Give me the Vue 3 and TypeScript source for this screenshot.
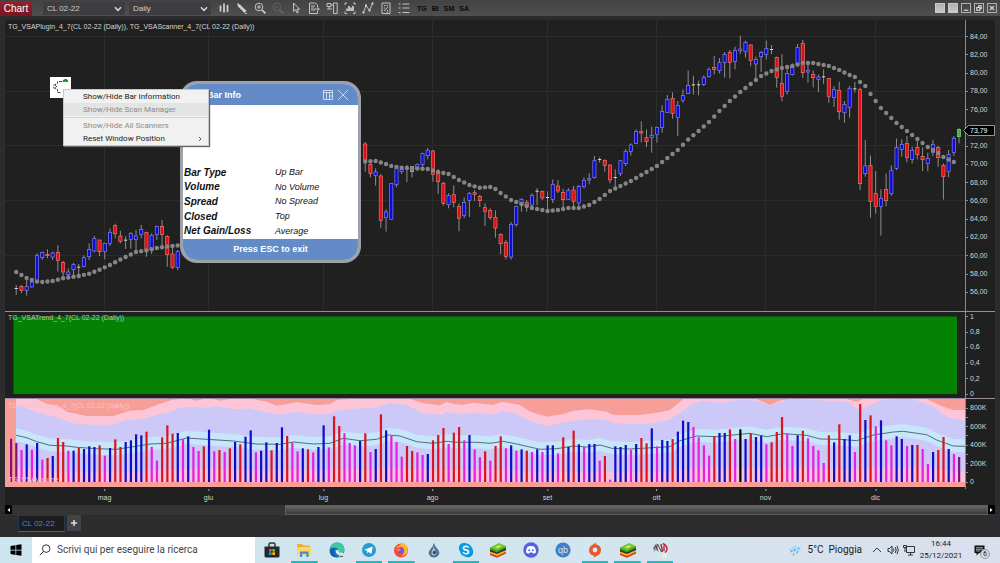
<script setup lang="ts">
import { ref } from 'vue'

type Pt = [number, number]
interface Segment { start: number; base: number; rows: string }

const STEP = 5.209
const FIRST_X = 11
const barX = (i: number): number => FIRST_X + i * STEP

/* Each entry: colour, wick top, body top, body bottom, wick bottom (third-units from the segment base). */
const segments: Segment[] = [
  {
    start: 1,
    base: 160,
    rows:
      'w 375 384 386 405,r 375 379 391 399,b 355 380 391 407,b 355 366 381 383,b 280 287 360 362,b 275 277 293 300,r 268 283 287 295,b 275 279 291 300,r 256 277 301 335,r 303 307 336 350,b 325 336 344 350,b 309 314 329 345,w 312 320 322 355,b 286 293 319 322,b 250 268 290 300,b 228 236 273 277,r 240 240 275 288,b 248 250 274 298,b 205 217 250 258,r 191 197 221 235,r 212 228 244 250,w 229 239 241 267,b 216 220 238 266,b 210 228 239 275,b 195 208 223 235,r 215 217 268 290,b 220 226 267 282,b 197 199 224 240,r 180 199 223 262,r 226 229 284 320,r 260 282 322 327,b 270 275 322 330',
  },
  {
    start: 68,
    base: 120,
    rows:
      'r 66 72 121 155,r 130 133 160 172,b 145 156 166 197,r 162 168 301 323,b 268 276 293 335,b 190 190 298 298,b 142 146 194 202,b 143 148 154 162,w 135 144 146 186,g 138 139 155 172,b 130 134 146 150,b 98 101 133 140,b 84 91 107 118,r 90 93 163 185,r 148 155 185 222,r 185 190 250 257,b 220 226 254 265,r 196 224 247 262,r 250 259 295 334,b 232 247 286 294,b 216 220 241 291,r 210 218 223 243,r 224 229 242 261,r 250 263 274 318,r 265 271 292 300,r 271 292 324 353,r 340 343 371 403,r 360 367 409 418,b 306 313 411 419,b 257 260 314 320,b 235 238 255 275,r 240 247 260 275,b 220 226 255 268,w 204 212 214 256,r 212 214 234 240,w 214 231 233 268,b 178 193 238 249,r 180 198 213 219,r 206 217 239 264,b 204 211 238 240,r 198 210 244 262,b 195 199 249 263,b 172 181 200 205,b 160 176 180 193,b 108 122 173 176,w 112 117 119 128,r 118 121 136 155,r 133 135 180 190,w 148 171 173 203,b 120 122 160 168,b 87 94 131 138,b 70 75 94 107,b 28 34 70 72,r 4 34 39 67,r 28 53 65 81,b 20 46 52 98',
  },
  {
    start: 124,
    base: 30,
    rows:
      'b 290 292 313 338,b 226 244 292 308,b 195 208 248 248,r 187 205 250 266,b 213 226 262 318,b 178 196 211 218,b 121 166 191 192,w 137 163 165 194,w 152 163 165 196,b 136 142 163 168,b 113 119 140 143,r 78 112 118 133,b 84 98 122 130,b 66 73 97 143,r 60 67 97 145,b 50 61 94 118,b 17 57 62 72,b 32 37 64 83,r 43 45 91 109,b 80 88 102 150,b 63 67 80 126,b 32 55 73 88,w 45 57 59 73,r 80 82 142 173,r 73 160 199 214,b 112 130 184 193,b 100 110 134 136,b 42 52 100 110,r 30 40 128 144,b 105 121 126 158,r 121 133 143 172,b 134 141 148 186,w 118 139 141 162,r 145 145 199 218,b 168 178 203 231,r 155 181 245 269,b 213 223 248 278,b 168 175 232 263,w 156 175 177 188,r 173 179 461 480,b 330 408 431 440,r 377 406 514 563,r 423 490 529 551,b 478 505 529 617,r 431 478 512 529,b 406 422 491 497,b 326 352 415 420,b 328 343 358 380,r 318 340 383 397,b 350 361 388 400,r 325 352 374 388,r 352 379 389 423,b 368 385 400 424,b 329 343 368 378,r 348 352 383 410,r 400 406 440 509,b 360 373 424 442,b 318 325 367 378,n 295 298 320 340',
  },
]

const candles = segments.flatMap((s) =>
  s.rows.split(',').map((row, k) => {
    const [kind, ...v] = row.split(' ')
    const [wt, bt, bb, wb] = v.map((n) => s.base + Number(n) / 3)
    return { kind, x: barX(s.start + k), wt, bt, h: Math.max(bb - bt, 1), wb }
  }),
)

const averageSegments: Pt[][] = [
  [[1, 272], [2, 275], [3, 278], [4, 280], [5, 281.6], [6, 282], [8, 281], [10, 278.3], [13, 276], [15, 273.7], [17, 269.7], [19, 265], [21, 259.5], [24, 252], [26, 250.5], [28, 248], [30, 246.5], [33, 245]],
  [[68, 161.5], [70, 161], [72, 164], [73, 166], [75, 167.7], [80, 169], [82, 172], [84, 174], [86, 180], [88, 185], [90, 187.7], [92, 187], [93, 189], [94, 193], [96, 200], [98, 204], [100, 208], [103, 211], [105, 210], [107, 208], [109, 208], [111, 205], [113, 199], [115, 191], [117, 186], [119, 181], [121, 175], [122, 172], [124, 166], [126, 158], [128, 150], [130, 139.5], [132, 131], [134, 122], [136, 111], [138, 101], [140, 92], [142, 84], [144, 76], [146, 71], [148, 68], [150, 66], [152, 63], [154, 63], [155, 64], [157, 66], [159, 70], [161, 75], [162, 77], [163, 82], [164, 86], [165, 94], [166, 101], [167, 108], [168, 113], [170, 123], [172, 131], [174, 139], [176, 147], [178, 153], [179, 157], [181, 162]],
]
const dots: Pt[] = averageSegments.flatMap((seg) => {
  const out: Pt[] = []
  for (let k = 0; k < seg.length - 1; k++) {
    const [a, ya] = seg[k]
    const [b, yb] = seg[k + 1]
    for (let i = a; i < b; i++) out.push([barX(i), ya + ((yb - ya) * (i - a)) / (b - a)])
  }
  const last = seg[seg.length - 1]
  out.push([barX(last[0]), last[1]])
  return out
})

const volumeData =
  'p146 p159 m180 b163 m179 b159 m209 r204 b198 r144 r156 m182 b182 r174 b177 b169 b171 r166 m197 b174 r148 r171 b156 b151 b133 b136 r125 m171 m212 r142 r106 r131 b129 m148 b139 m171 m183 r169 b119 m184 r180 m186 r175 b156 r163 b140 b121 m187 b182 b157 r181 b159 b112 r138 m158 m184 b175 r178 m187 b171 b106 m172 r79 r108 m130 m159 m166 b153 r130 m186 b177 r73 b121 m138 m156 m200 r168 r183 m187 m195 b192 r151 r135 r114 m162 r128 r111 m151 b135 m178 m202 r184 m212 r168 r139 m175 b166 m182 b178 r182 m186 b178 m186 b166 b166 m190 r142 b171 r122 b163 m171 b162 b162 m212 r198 m269 b169 b171 b165 m180 b162 r144 r160 b115 m169 b150 b153 r147 b125 b92 b96 m111 m142 m166 m197 r139 b129 b129 r118 m147 k118 b147 r130 b141 b137 m163 r157 r126 r81 m131 m168 b136 r122 m145 m168 m181 m219 r136 b157 r103 b147 b136 m186 r42 b90 r76 m109 b91 m151 m166 b139 b147 m168 b165 r165 m177 m222 b186 r180 r141 b177 m192 p201'
const volumes = volumeData.split(' ').map((v, i) => ({ kind: v[0], x: barX(i) - 1, y: 390 + Number(v.slice(1)) / 3 }))

const line = (origin: number, raw: string): Pt[] =>
  raw.split(' ').map((p) => {
    const [x, y] = p.split(',').map(Number)
    return [origin + x / 3, 390 + y / 3]
  })

const outer: Pt[] = [
  ...line(0, '48,27 110,27 140,42 180,50 200,65 260,78 340,78 390,62 430,60 470,45 515,30 540,27 570,27 590,32 610,27 640,27 660,32 690,27 760,27 800,35 830,47 890,37 950,45'),
  ...line(330, '0,42 20,30 60,27 240,27 280,40 330,46 350,36 370,42 400,44 430,38 490,45 515,35 570,45 600,65 650,80 700,72 730,62 780,58 830,65 850,75 930,75'),
  ...line(660, '0,67 30,60 70,27 290,27 330,45 365,30 400,27 560,27 590,35 610,27 800,27 850,50 880,60 915,60'),
]
const inner: Pt[] = [
  ...line(0, '48,45 100,62 140,75 180,85 220,100 260,104 340,104 380,90 430,86 470,75 510,65 545,52 600,50 620,55 650,48 700,58 750,55 790,65 840,74 890,65 950,74'),
  ...line(330, '0,72 30,60 90,55 130,55 180,38 230,45 280,70 330,75 350,65 380,72 430,68 490,74 515,62 560,72 600,92 650,108 700,98 730,92 780,88 830,90 850,100 940,102'),
  ...line(660, '0,95 30,88 60,70 100,40 130,32 180,38 230,30 290,32 330,48 365,34 400,27 560,35 600,60 620,50 660,32 700,27 760,28 820,50 860,80 915,92'),
]
const mean: Pt[] = [
  ...line(0, '48,136 80,143 110,155 150,166 200,168 230,172 290,176 350,178 400,170 450,162 500,160 560,144 620,148 700,153 770,162 840,163 880,156 940,162'),
  ...line(330, '0,160 40,145 90,152 140,148 175,135 210,138 260,155 310,160 350,154 380,157 440,157 480,160 520,154 560,162 630,178 680,176 730,168 770,171 810,165 845,175 900,177 950,174'),
  ...line(660, '0,172 30,170 60,152 110,138 170,140 270,130 320,140 370,131 440,136 480,147 540,148 590,152 640,135 700,126 730,124 800,134 830,150 880,168 915,169'),
]
const str = (pts: Pt[]): string => pts.map((p) => `${p[0].toFixed(1)},${p[1].toFixed(1)}`).join(' ')
const down = (pts: Pt[], y: number): string => `${str(pts)} 965,${y} 16,${y}`
const shift = (pts: Pt[], d: number): Pt[] => pts.map(([x, y]) => [x, y + d])
const glow = `${str(shift(mean, -7))} ${str(shift(mean, 6).reverse())}`
const lower: Pt[] = mean.map(([x, y]) => [x, 471 + (y - 445) * 0.3])

const months = [
  { name: 'mag', x: 104.5 }, { name: 'giu', x: 208.5 }, { name: 'lug', x: 323.5 }, { name: 'ago', x: 432.5 },
  { name: 'set', x: 547.5 }, { name: 'ott', x: 656.5 }, { name: 'nov', x: 765.5 }, { name: 'dic', x: 875.5 },
]
const gridY = [36.5, 91.5, 145.5, 200.5, 255.5]

const pct = (y: number, top: number, height: number): string => `${((y - top) / height) * 100}%`
/* The 74,00 tick lies behind the last-price marker and carries no label. */
const priceTicks = Array.from({ length: 15 }, (_, k) => ({
  label: k === 5 ? '' : `${84 - k * 2},00`,
  top: pct(36.5 + k * 18.27, 20, 292),
}))
const trendTicks = ['1', '0,8', '0,6', '0,4', '0,2', '0'].map((label, k) => ({ label, top: pct(316.5 + k * 15.5, 312, 87) }))
const volumeTicks = ['800K', '', '600K', '', '400K', '', '200K', '', '0'].map((label, k) => ({
  label,
  top: pct(408 + k * 9.25, 399, 90),
}))

const instrument = ref('CL 02-22')
const interval = ref('Daily')
const search = ref('')

const info = [
  ['Bar Type', 'Up Bar'],
  ['Volume', 'No Volume'],
  ['Spread', 'No Spread'],
  ['Closed', 'Top'],
  ['Net Gain/Loss', 'Average'],
]
const tools = ['bars', 'pencil', 'zoomin', 'zoomout', 'pointer', 'doc', 'panel', 'indicator', 'poly', 'strategy', 'list']
const macros = ['TG', 'BI', 'SM', 'SA']
const apps = [
  { id: 'store', open: false }, { id: 'explorer', open: true }, { id: 'edge', open: false }, { id: 'telegram', open: true },
  { id: 'firefox', open: true }, { id: 'drop', open: false }, { id: 'skype', open: true }, { id: 'stack', open: false },
  { id: 'discord', open: false }, { id: 'qb', open: false }, { id: 'origin', open: true }, { id: 'stack', open: true },
  { id: 'ninja', open: true },
]
</script>

<template>
  <div class="desktop">
    <header class="titlebar">
      <h1 class="title">Chart</h1>
      <label class="pick">
        <select v-model="instrument" aria-label="Instrument"><option>CL 02-22</option></select>
        <svg viewBox="0 0 8 6"><path d="M1 1.2 4 4.4 7 1.2" /></svg>
      </label>
      <label class="pick">
        <select v-model="interval" aria-label="Interval"><option>Daily</option></select>
        <svg viewBox="0 0 8 6"><path d="M1 1.2 4 4.4 7 1.2" /></svg>
      </label>
      <nav class="tools">
        <button v-for="t in tools" :key="t" type="button" :aria-label="t" :class="{ dim: t === 'zoomout' }">
          <svg viewBox="0 0 12 12">
            <path v-if="t === 'bars'" class="heavy" d="M2.500 3.500v6M6 1.500v9M9.500 3v7" />
            <g v-else-if="t === 'pencil'"><path class="fill" d="M1 1l1 3.5L8.5 11l2-2L4 2.5z" /><path d="M9 11.5h2" /></g>
            <g v-else-if="t === 'zoomin'"><circle cx="5" cy="5" r="3.8" /><path d="M3 5h4M5 3v4" /><path class="heavy" d="M8 8l3.4 3.4" /></g>
            <g v-else-if="t === 'zoomout'"><circle cx="5" cy="5" r="3.8" /><path d="M3 5h4" /><path class="heavy" d="M8 8l3.4 3.4" /></g>
            <path v-else-if="t === 'pointer'" d="M3.5 1v8.4L5.6 7.6 7 11l1.4-.6L7 7.2h2.6z" />
            <path v-else-if="t === 'doc'" d="M1.5 1h6l2 2v2M1.5 1v10.5h8V9M3 4h4M3 6h3M3 8h4M6.5 7h4.5M9.5 5.2 11.3 7 9.5 8.8" />
            <path v-else-if="t === 'panel'" d="M1 1.5h4v3H1zM5 3h2M1 7h5M7.5 1h3.7v10.5H7.5zM3 7V5" />
            <g v-else-if="t === 'indicator'"><path d="M1 3V1h2M9 1h2v2M1 9.500v2h2M9 11.500h2v-2" /><path class="heavy" d="M3 9V6.500M5 9V4M7 9V5.500M9 9V4" /></g>
            <g v-else-if="t === 'poly'"><path d="M1.500 10.500 4 3.500 7.500 8.500 10.500 1.500" /><path class="fill" d="M.5 9.500h2v2h-2zM3 2.500h2v2H3zM6.500 7.500h2v2h-2zM9.500.500h2v2h-2z" /></g>
            <path v-else-if="t === 'strategy'" d="M2 1h8v10.500H2zM4 3.500h1.500M6.500 3.500H8M8 5 4 9M4 6h1M7 8.500h1M6.500 10H8" />
            <path v-else d="M.5 2h2M.5 6h2M.5 10.500h2M4.500 2h7M4.500 6h7M4.500 10.500h7" />
          </svg>
        </button>
      </nav>
      <div class="macros">
        <button v-for="m in macros" :key="m" type="button">{{ m }}</button>
      </div>
      <div class="win">
        <button type="button" class="solid" aria-label="Link colour"></button>
        <button type="button" class="solid" aria-label="Interval link"></button>
        <button type="button" aria-label="Minimize"><svg viewBox="0 0 9 9"><path d="M2 7h5" /></svg></button>
        <button type="button" aria-label="Restore"><svg viewBox="0 0 9 9"><path d="M2 4h3.500v3H2zM4 4V2h3v3H5.500" /></svg></button>
        <button type="button" aria-label="Close"><svg viewBox="0 0 9 9"><path d="M2 2l5 5M7 2 2 7" /></svg></button>
      </div>
    </header>

    <main class="charts">
      <section class="panel">
        <svg class="plot" viewBox="5 20 960 292" preserveAspectRatio="none">
          <path v-for="m in months" :key="m.name" class="grid" :d="`M${m.x} 20V312`" />
          <path v-for="y in gridY" :key="y" class="grid" :d="`M5 ${y}H965`" />
          <g v-for="c in candles" :key="c.x" :class="['candle', c.kind]">
            <path :d="`M${c.x} ${c.wt}V${c.wb}`" />
            <rect :x="c.x - 1.6" :y="c.bt" width="3.200" :height="c.h" />
          </g>
          <circle v-for="d in dots" :key="d[0]" class="dot" :cx="d[0]" :cy="d[1]" r="2.200" />
        </svg>
        <p class="caption">TG_VSAPlugin_4_7(CL 02-22 (Daily)), TG_VSAScanner_4_7(CL 02-22 (Daily))</p>
        <div class="axis">
          <span v-for="t in priceTicks" :key="t.top" class="tick" :style="{ top: t.top }">{{ t.label }}</span>
          <div class="last" :style="{ top: pct(129.5, 20, 292) }">
            <svg viewBox="0 0 32 11"><path d="M.5 5.500 5.500.500H31.500v10H5.500z" /></svg>
            <span>73,79</span>
          </div>
        </div>
      </section>

      <section class="panel ruled">
        <svg class="plot" viewBox="5 312 960 87" preserveAspectRatio="none">
          <rect class="trend" x="13.500" y="316.500" width="943.500" height="77.500" />
        </svg>
        <p class="caption low">TG_VSATrend_4_7(CL 02-22 (Daily))</p>
        <div class="axis">
          <span v-for="t in trendTicks" :key="t.label" class="tick" :style="{ top: t.top }">{{ t.label }}</span>
        </div>
      </section>

      <section class="panel ruled">
        <svg class="plot" viewBox="5 399 960 90" preserveAspectRatio="none">
          <rect class="salmon" x="5" y="399" width="960" height="88" />
          <polygon class="pink" :points="down(outer, 482)" />
          <polygon class="lavender" :points="down(inner, 482)" />
          <polygon class="glow" :points="glow" />
          <polygon class="blush" :points="down(lower, 482)" />
          <polyline class="mean" :points="str(mean)" />
          <rect v-for="v in volumes" :key="v.x" :class="['vol', v.kind]" :x="v.x" :y="v.y" width="2.200" :height="482 - v.y" />
        </svg>
        <p class="caption faint">TG_VSAVolume_4_7(CL 02-22 (Daily))</p>
        <p class="caption faint foot">TG_VSAVolume</p>
        <div class="axis">
          <span v-for="t in volumeTicks" :key="t.top" class="tick" :style="{ top: t.top }">{{ t.label }}</span>
        </div>
      </section>
    </main>

    <div class="time">
      <span v-for="m in months" :key="m.name" :style="{ left: `${((m.x - 5) / 960) * 100}%` }">{{ m.name }}</span>
    </div>

    <div class="scroll">
      <button type="button" aria-label="Scroll left"><svg viewBox="0 0 7 8"><path d="M5 2v4L2.500 4z" /></svg></button>
      <div class="track"><div class="thumb"></div></div>
      <button type="button" aria-label="Scroll right"><svg viewBox="0 0 7 8"><path d="M2 2v4l2.500-2z" /></svg></button>
    </div>

    <div class="tabs">
      <button type="button" class="tab">CL 02-22</button>
      <button type="button" class="add" aria-label="New tab"><svg viewBox="0 0 8 8"><path d="M4 1v6M1 4h6" /></svg></button>
    </div>

    <footer class="taskbar">
      <button type="button" class="start" aria-label="Start">
        <svg viewBox="0 0 12 12"><path d="M.5 2 5.500 1.200V5.700H.5zM6.200 1.100 11.500.3V5.700H6.200zM.5 6.400h5v4.500L.5 10.100zM6.200 6.400h5.300v5.300l-5.300-.8z" /></svg>
      </button>
      <label class="search">
        <svg viewBox="0 0 12 12"><circle cx="7.200" cy="4.600" r="3.800" /><path d="M4.500 7.400.8 11.200" /></svg>
        <input v-model="search" type="text" placeholder="Scrivi qui per eseguire la ricerca" aria-label="Cerca" />
      </label>
      <nav class="apps">
        <button v-for="(a, k) in apps" :key="k" type="button" :aria-label="a.id" :class="{ open: a.open }">
          <svg viewBox="0 0 16 16">
            <g v-if="a.id === 'store'">
              <path d="M5 5V2.500Q5 1 6.500 1h3Q11 1 11 2.500V5" fill="none" stroke="#2a3440" stroke-width="1.500" />
              <path d="M.5 4.500h15V14q0 1.500-1.500 1.500H2Q.5 15.500.5 14z" fill="#25282e" />
              <path d="M5 7h2.700v2.700H5z" fill="#f25022" /><path d="M8.300 7H11v2.700H8.300z" fill="#7fba00" />
              <path d="M5 10.300h2.700V13H5z" fill="#00a4ef" /><path d="M8.300 10.300H11V13H8.300z" fill="#ffb900" />
            </g>
            <g v-else-if="a.id === 'explorer'">
              <path d="M1 2h5l1.500 1.500H14V14H1z" fill="#e9b32f" /><path d="M1 5h14v9H1z" fill="#fcd667" />
              <path d="M4 15V9.500h8.500V15h-2.200v-3.200H6.200V15z" fill="#3f8fd6" />
            </g>
            <g v-else-if="a.id === 'edge'">
              <circle cx="8" cy="8" r="7.500" fill="#1779c4" />
              <path d="M.8 7Q2 .5 8.500.5q6.500.2 7 6.500-.2 4-4 4-3 0-2.500-2.300Q9.500 6 6 5.500 2.500 5.200.8 7z" fill="#42c7a0" />
              <path d="M5 8q-1.500 5 3.500 7.200Q2.500 16 .8 10.500.5 8 2.500 6.500 5 5.500 7 7z" fill="#155ba5" />
              <path d="M6.500 8.500q2-1 3 0-.8 3 4.500 2.800-1.500 2.200-4 1.700-3-.5-3.500-4.500z" fill="#d9f1f5" />
              <circle cx="12.500" cy="12.800" r="2.600" fill="#e8ddd4" /><path d="M10.500 15q2-2.500 4 0z" fill="#43546b" />
            </g>
            <g v-else-if="a.id === 'telegram'">
              <circle cx="8" cy="8" r="7" fill="#279cd0" /><path d="M3.300 7.800 11.800 4.400 10.300 12 7.600 10 6 11.300V9z" fill="#fff" />
            </g>
            <g v-else-if="a.id === 'firefox'">
              <circle cx="8" cy="8.500" r="7" fill="#ff4b35" /><path d="M2.500 3 5 4.500Q8 1.500 10.500.8q4.500 3 4.300 8Q13.500 14 8 13.500q3.500-2 3-6L8 4.500 5 6z" fill="#ffb62b" />
              <circle cx="7.700" cy="8.800" r="3.500" fill="#8150d8" /><path d="M3 7q3-1.500 5 .5L6 9.500Q4 10 3 7z" fill="#ff7a2b" />
            </g>
            <g v-else-if="a.id === 'drop'">
              <path d="M8 .8Q8.500 4 11.500 7q3 3.500 1 6.300Q11 15.500 8 15.500t-4.500-2.200Q1.500 10.500 4.500 7 7.500 4 8 .8z" fill="#526f8e" />
              <path d="M7.500 4Q8 7 10 9q1.500 2.500-.5 4-3 1.200-4-1.200Q5 9 7 7z" fill="#a9c1d6" /><circle cx="8.500" cy="10.500" r="1.800" fill="#36506e" />
            </g>
            <g v-else-if="a.id === 'skype'">
              <circle cx="6" cy="6" r="5.200" fill="#0a9be8" /><circle cx="10" cy="10" r="5.200" fill="#0a8ed8" /><circle cx="8" cy="8" r="6.400" fill="#0a9be0" />
              <path d="M10.800 5.600Q9.800 4.200 8 4.200 5.500 4.300 5.500 6T8 8t2.600 2Q10.500 11.800 8 11.800 6 11.700 5.100 10.200" fill="none" stroke="#fff" stroke-width="1.500" />
            </g>
            <g v-else-if="a.id === 'stack'">
              <path d="M0 11v2l7 2.800 9-4.300v-2z" fill="#d8342c" /><path d="M0 9v2.300l7 2.700 9-4.200V7.500z" fill="#f5b51b" />
              <path d="M0 7v2.500L7 12l9-4V5.500z" fill="#26343a" /><path d="M0 5.500v2L7 10.500l9-4.500V4z" fill="#3e9f25" /><path d="M0 5.500 9 1l7 3-9 4.500z" fill="#78c62f" />
              <path d="M5 5.300 9 3.300l2.500 1-4 2z" fill="#c5ef6c" />
            </g>
            <g v-else-if="a.id === 'discord'">
              <circle cx="8" cy="8" r="7.700" fill="#5562e0" />
              <path d="M4.500 4.800Q8 3.300 11.500 4.800q1.700 3 1.500 5.800-1.500 1-2.800 1.100l-.7-1.100h-3l-.7 1.100Q4.500 11.600 3 10.600 2.800 7.800 4.500 4.800z" fill="#fff" />
              <circle cx="6.200" cy="8.200" r="1" fill="#5562e0" /><circle cx="9.800" cy="8.200" r="1" fill="#5562e0" />
            </g>
            <g v-else-if="a.id === 'qb'">
              <circle cx="8" cy="8" r="7.600" fill="#3f7fc4" />
              <text class="qb" x="8" y="11" text-anchor="middle">qb</text>
            </g>
            <g v-else-if="a.id === 'origin'">
              <path d="M9.500.5 8.800 2.200Q14 3 14 8.200q-.3 4-4 5.600l-3.500 2 .7-2Q2 13 2 8q.3-4 4-5.500z" fill="#e8582c" /><circle cx="8" cy="8" r="2.400" fill="#dbe7f0" />
            </g>
            <g v-else>
              <path d="M1 7Q1.500 2 5 1.500l2 2-1.500 3L7 10 4 8l-1.500 2z" fill="#a8a09e" />
              <path d="M2 7 4 3.500l1.500 5M5.500 2l4 8" fill="none" stroke="#4a3c3c" stroke-width="1" />
              <path d="M9 2l1.500 8M11 1.500q4 2 4 5.500 0 2.500-2 3.500M12 3.500V9" fill="none" stroke="#b52432" stroke-width="1.400" />
              <path d="M10 11h5v4.500h-5z" fill="#ecebea" />
            </g>
          </svg>
        </button>
      </nav>
      <div class="tray">
        <svg class="cloud" viewBox="0 0 14 14"><path d="M3 9Q0 8.500 1 6q.8-1.500 2.300-1Q4.500 1.500 8 2.500q2 .8 2 2.500 3-.5 3 2T10 9z" fill="#b5d9f0" /><path d="M4 7.500 3.300 9.300M7 6l-.8 2M9.500 8.500l-.8 2M6 10.500l-.8 2M11 4.500l-.6 1.500" stroke="#2f90d8" /></svg>
        <span class="weather"><span>5°C</span><span>Pioggia</span></span>
        <svg class="glyph" viewBox="0 0 12 12"><path d="M2 8l4-4 4 4" /></svg>
        <svg class="glyph" viewBox="0 0 12 12"><path d="M1 4.500h1.500L5 2v8L2.500 7.500H1zM6.500 4.500q1 1.500 0 3M8.200 3q2 3 0 6M10 1.800q2.500 4.200 0 8.400" /></svg>
        <svg class="glyph" viewBox="0 0 12 12"><path d="M3.500 2.500h8v6h-8zM7.500 8.500V11M5 11h5M.5 1.500h3v2h-3zM2 3.500V8" /></svg>
        <time class="clock"><span>16:44</span><span>25/12/2021</span></time>
        <button type="button" class="notes" aria-label="Notifiche">
          <svg viewBox="0 0 11 11"><path d="M.5.500h10v7.500H5L2.500 10.500V8h-2z" /><path class="rows" d="M2 2.700h7M2 4.300h7M2 5.900h4" /></svg>
          <span>6</span>
        </button>
      </div>
    </footer>

    <section class="dialog" role="dialog" aria-label="Bar Info">
      <header>
        <h2>Bar Info</h2>
        <button type="button" aria-label="Dock"><svg viewBox="0 0 12 12"><path d="M1.500 1.500h9v9h-9zM1.500 3.500h9M4.500 3.500v7M7.500 3.500v7M7.500 7h3" /></svg></button>
        <button type="button" aria-label="Close"><svg viewBox="0 0 12 12"><path d="M.8.8l10.400 10.400M11.200.8.8 11.200" /></svg></button>
      </header>
      <dl>
        <div v-for="row in info" :key="row[0]"><dt>{{ row[0] }}</dt><dd>{{ row[1] }}</dd></div>
      </dl>
      <footer>Press ESC to exit</footer>
    </section>

    <button type="button" class="launcher" aria-label="VSA menu">
      <svg viewBox="0 0 21 21"><path d="M12 4.500H7.500v2L3 8.500M3 10.500l4.500 2v3h4M5 8l2 2-2 1" fill="none" stroke="#444" stroke-dasharray="3 1" /><path d="M12.500 5Q13 2 15.500 2t2.700 3h-2l-.8-1-.8 1z" fill="#18822a" /></svg>
    </button>

    <menu class="menu">
      <li><button type="button">Show/Hide Bar Information</button></li>
      <li class="hover"><button type="button" disabled>Show/Hide Scan Manager</button></li>
      <li class="rule"></li>
      <li><button type="button" disabled>Show/Hide All Scanners</button></li>
      <li><button type="button">Reset Window Position<svg viewBox="0 0 4 6"><path d="M1 1l2 2-2 2" /></svg></button></li>
    </menu>
  </div>
</template>

<style>
body {
  margin: 0;
  background: #2d2d30;
}
</style>

<style scoped>
.desktop {
  position: relative;
  display: flex;
  flex-direction: column;
  height: 100vh;
  background: #2c2c2e;
  font-family: 'Liberation Sans', Arial, sans-serif;
  font-size: 7px;
  color: #d6d6d6;
  overflow: hidden;
}
.desktop * { box-sizing: border-box; }
button {
  padding: 0;
  border: 0;
  background: none;
  font: inherit;
  color: inherit;
}
svg { display: block; }
h1, h2, p, dl, dd, menu { margin: 0; padding: 0; }

.titlebar {
  display: flex;
  align-items: center;
  height: 16px;
  margin-bottom: 4px;
  background: linear-gradient(#434343, #4f4f4f);
}
.title {
  width: 32px;
  height: 15px;
  margin-right: 11px;
  background: linear-gradient(#96212c, #781520);
  color: #fff;
  font-size: 10px;
  font-weight: 400;
  line-height: 15px;
  text-align: center;
}
.pick {
  position: relative;
  width: 82px;
  height: 13px;
  margin-right: 4px;
  background: #3e3e42;
}
.pick select {
  width: 100%;
  height: 13px;
  padding: 0 4px;
  border: 0;
  appearance: none;
  background: none;
  color: #ccc;
  font: 8px/13px 'Liberation Sans', Arial, sans-serif;
}
.pick svg {
  position: absolute;
  right: 3px;
  top: 4px;
  width: 8px;
  height: 6px;
  fill: none;
  stroke: #ddd;
  stroke-width: 1.5;
  pointer-events: none;
}
.tools { display: flex; gap: 6px; margin-left: 3px; }
.tools svg { width: 12px; height: 12px; fill: none; stroke: #d0d0d0; stroke-width: 0.9; }
.tools .heavy { stroke-width: 1.7; }
.tools .fill { fill: #d0d0d0; stroke: none; }
.tools .dim { opacity: 0.2; }
.macros { display: flex; gap: 5px; margin-left: 7px; color: #080808; font-size: 7px; font-weight: 700; }
.win { display: flex; gap: 3px; margin: 0 3px 0 auto; }
.win button { width: 10px; height: 10px; border: 1px solid #b0b0b0; }
.win .solid { border-color: #c8c8c8; background: linear-gradient(#b0b0b0, #c8c8c8); }
.win svg { width: 8px; height: 8px; fill: none; stroke: #e8e8e8; stroke-width: 1.2; }

.charts {
  display: grid;
  grid-template-rows: 292fr 87fr 90fr;
  flex: 1;
  min-height: 0;
  margin: 0 5px;
  background: #202020;
}
.panel {
  position: relative;
  display: grid;
  grid-template-columns: 1fr 30px;
  min-height: 0;
}
.ruled { box-shadow: 0 -1px #9c8c9c; }
.plot { width: 100%; height: 100%; min-height: 0; }
.grid { stroke: #2b2b2b; stroke-width: 1; }
.candle path { stroke: #8d8d8d; stroke-width: 1; }
.candle rect { stroke-width: 0.7; }
.candle.r rect { fill: #e40c10; stroke: #e07874; }
.candle.b rect { fill: #0d08dc; stroke: #8080f0; }
.candle.w rect { fill: #d8d8d8; stroke: none; }
.candle.g rect { fill: #777; stroke: #aaa; }
.candle.n rect { fill: #35b83c; stroke: #7cd480; }
.dot { fill: #858585; }
.trend { fill: #048204; }
.salmon { fill: #f79e98; }
.pink { fill: #fcc6d8; }
.lavender { fill: #ccc8f8; }
.glow { fill: #c6e6fb; }
.blush { fill: #f9c3dc; }
.mean { fill: none; stroke: #3c4a58; stroke-width: 0.8; }
.vol.r { fill: #d9151f; }
.vol.b { fill: #100cc8; }
.vol.m { fill: #e81fe0; }
.vol.p { fill: #84107c; }
.vol.k { fill: #000; }
.caption {
  position: absolute;
  left: 3px;
  top: 3px;
  line-height: 8px;
  white-space: nowrap;
}
.low { top: 2px; color: #b8c8b8; }
.faint { color: #f8c4c4; }
.foot { top: auto; bottom: 5px; }
.axis { position: relative; border-left: 1px solid #8a8a8a; }
.tick {
  position: absolute;
  left: 0;
  display: flex;
  align-items: center;
  gap: 2px;
  height: 8px;
  margin-top: -4px;
  line-height: 8px;
}
.tick::before { content: ''; width: 2px; height: 1px; background: #8a8a8a; }
.last { position: absolute; left: -3px; width: 32px; height: 11px; margin-top: -5px; color: #fff; }
.last svg { width: 32px; height: 11px; fill: #000; stroke: #999; }
.last span { position: absolute; left: 7px; top: 1px; line-height: 9px; }

.time { position: relative; height: 16px; margin: 0 35px 0 5px; }
.time::after { content: ''; position: absolute; inset: 0 -30px 0 0; z-index: 0; background: #202020; }
.time span {
  position: absolute;
  top: 0;
  z-index: 1;
  padding-top: 5px;
  line-height: 8px;
  transform: translateX(-50%);
}
.time span::before { content: ''; position: absolute; left: 50%; top: 0; width: 1px; height: 2px; background: #aaa; }

.scroll { display: flex; height: 10px; margin: 0 5px; background: #343434; }
.scroll button { width: 7px; height: 9px; background: #000; }
.scroll svg { width: 7px; height: 8px; fill: #fff; }
.track { display: flex; flex: 1; justify-content: flex-end; }
.thumb { width: 72%; border: 1px solid #606060; background: linear-gradient(#666, #3a3a3a); }

.tabs { display: flex; gap: 2px; height: 22px; padding-left: 18px; }
.tab {
  width: 47px;
  height: 17px;
  padding: 0 3px;
  border: 1px solid #1d3a52;
  border-bottom-color: #2670a8;
  background: #1d1d20;
  color: #3090d4;
  font-size: 8px;
  text-align: left;
}
.add { display: grid; place-items: center; width: 14px; height: 16px; background: #434347; }
.add svg { width: 8px; height: 8px; stroke: #e0e0e0; stroke-width: 1.5; }

.taskbar {
  display: flex;
  height: 26px;
  background: linear-gradient(90deg, #cde5ee, #d3e5ee 60%, #dadfec);
  color: #1c1c1c;
  font-family: Roboto, 'Noto Sans', sans-serif;
}
.start { display: grid; place-items: center; width: 32px; }
.start svg { width: 12px; height: 12px; fill: #000; }
.search { display: flex; align-items: center; gap: 6px; width: 223px; padding-left: 7px; background: #fff; }
.search svg { width: 12px; height: 12px; fill: none; stroke: #333; }
.search input {
  flex: 1;
  min-width: 0;
  padding: 0;
  border: 0;
  outline: 0;
  background: none;
  font: 10px/14px Roboto, 'Noto Sans', sans-serif;
}
.search input::placeholder { color: #444; opacity: 1; }
.apps { display: grid; grid-template-columns: repeat(13, 1fr); width: 420px; margin-left: 1px; }
.apps button { display: grid; place-items: center; border: solid transparent; border-width: 0 3px; }
.apps .open { background: linear-gradient(#12bfc4, #12bfc4) bottom / 100% 2px no-repeat padding-box; }
.apps svg { width: 16px; height: 16px; }
.qb { fill: #d5e7f8; font: 9px 'Liberation Sans', sans-serif; }
.tray { display: flex; align-items: center; margin-left: auto; padding-right: 10px; }
.cloud { width: 14px; height: 14px; margin-right: 6px; fill: none; }
.weather { display: flex; gap: 5px; margin-right: 9px; font: 10px/14px Roboto, sans-serif; }
.glyph { width: 12px; height: 12px; margin-right: 4px; fill: none; stroke: #222; stroke-width: 0.9; }
.clock { display: grid; width: 44px; margin: 0 11px 0 0; font: 8px/12px Roboto, sans-serif; text-align: center; }
.notes { position: relative; width: 16px; height: 16px; }
.notes svg { width: 11px; height: 11px; fill: #111; }
.notes .rows { stroke: #e0e4ec; stroke-width: 0.7; }
.notes span {
  position: absolute;
  right: 0;
  bottom: -1px;
  width: 10px;
  height: 10px;
  border: 1px solid #999;
  border-radius: 50%;
  background: #d8dae0;
  font-size: 7px;
  line-height: 8px;
}

.dialog {
  position: absolute;
  left: 180px;
  top: 81px;
  display: flex;
  flex-direction: column;
  width: 181px;
  height: 182px;
  border: 3px solid #9da1a8;
  border-radius: 17px;
  background: #fff;
  color: #111;
  overflow: hidden;
}
.dialog header {
  display: flex;
  align-items: center;
  gap: 3px;
  height: 21px;
  padding: 0 9px 0 24px;
  background: #638bc8;
  color: #fff;
}
.dialog h2 { flex: 1; font-size: 9px; }
.dialog header svg { width: 12px; height: 12px; fill: none; stroke: #e4ecf8; stroke-width: 0.8; }
.dialog dl {
  display: grid;
  grid-auto-rows: 1fr;
  flex: 1;
  padding: 60px 1px 1px;
  font-style: italic;
}
.dialog dl div { display: grid; grid-template-columns: 91px 1fr; align-items: center; }
.dialog dt { font-size: 10px; font-weight: 700; }
.dialog dd { font-size: 9px; }
.dialog footer {
  height: 21px;
  background: #638bc8;
  color: #fff;
  font-size: 9px;
  font-weight: 700;
  line-height: 20px;
  text-align: center;
}

.launcher { position: absolute; left: 50px; top: 77px; width: 21px; height: 21px; background: #fff; }
.launcher svg { width: 21px; height: 21px; }
.menu {
  position: absolute;
  left: 63px;
  top: 89px;
  width: 146px;
  border: 1px solid #c8c8c8;
  background: #f1f1f1;
  box-shadow: 1px 1px 1px #666;
  list-style: none;
  color: #222;
  font: 8px/13px Roboto, 'Noto Sans', sans-serif;
}
.menu button {
  display: flex;
  align-items: center;
  justify-content: space-between;
  width: 100%;
  height: 13px;
  padding: 0 6px 0 19px;
}
.menu button:disabled { color: #8c8c8c; }
.menu .hover { background: #e4e4e4; }
.menu .rule { height: 1px; margin: 1px 0; background: #d4d4d4; }
.menu svg { width: 4px; height: 6px; fill: none; stroke: #333; stroke-width: 0.8; }
</style>
